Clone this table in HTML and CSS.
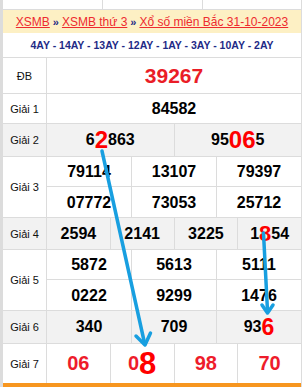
FILE: index.html
```html
<!DOCTYPE html>
<html lang="vi">
<head>
<meta charset="utf-8">
<title>XSMB 31-10-2023</title>
<link rel="stylesheet" href="styles.css">
</head>
<body>
<div class="wrap">
  <div class="prev"><div></div><div></div><div></div></div>
  <div class="title"><a>XSMB</a> <b>»</b> <a>XSMB thứ 3</a> <b>»</b> <a>Xổ số miền Bắc 31-10-2023</a></div>
  <div class="codes">4AY - 14AY - 13AY - 12AY - 1AY - 3AY - 10AY - 2AY</div>

  <div class="row h36">
    <div class="lbl">ĐB</div>
    <div class="cells c1"><div class="c db">39267</div></div>
  </div>
  <div class="row h30">
    <div class="lbl">Giải 1</div>
    <div class="cells c1"><div class="c">84582</div></div>
  </div>
  <div class="row h33 gray">
    <div class="lbl">Giải 2</div>
    <div class="cells c2">
      <div class="c">6<span class="hl s24">2</span>863</div>
      <div class="c">95<span class="hl s24">06</span>5</div>
    </div>
  </div>
  <div class="row h61">
    <div class="lbl">Giải 3</div>
    <div class="cells c3 two">
      <div class="c">79114</div><div class="c">13107</div><div class="c">79397</div>
      <div class="c">07772</div><div class="c">73053</div><div class="c">25712</div>
    </div>
  </div>
  <div class="row h32 gray">
    <div class="lbl">Giải 4</div>
    <div class="cells c4">
      <div class="c">2594</div><div class="c">2141</div><div class="c">3225</div>
      <div class="c">1<span class="hl s22">8</span>54</div>
    </div>
  </div>
  <div class="row h61">
    <div class="lbl">Giải 5</div>
    <div class="cells c3 two">
      <div class="c">5872</div><div class="c">5613</div><div class="c">5111</div>
      <div class="c">0222</div><div class="c">9299</div><div class="c">1476</div>
    </div>
  </div>
  <div class="row h33 gray">
    <div class="lbl">Giải 6</div>
    <div class="cells c3">
      <div class="c">340</div><div class="c">709</div>
      <div class="c">93<span class="hl s23">6</span></div>
    </div>
  </div>
  <div class="row h39 last">
    <div class="lbl">Giải 7</div>
    <div class="cells c4 g7">
      <div class="c">06</div>
      <div class="c">0<span class="hl s30">8</span></div>
      <div class="c">98</div>
      <div class="c">70</div>
    </div>
  </div>
  <div class="foot"></div>

  <svg class="arrows" width="303" height="387" viewBox="0 0 303 387">
    <g fill="none" stroke="#189fe0" stroke-width="3.5" stroke-linecap="round" stroke-linejoin="round">
      <line x1="102" y1="151" x2="144.5" y2="343"/>
      <polyline points="136,336 145,345 150.5,333"/>
      <line x1="263.5" y1="233" x2="267.5" y2="311"/>
      <polyline points="262,305 267.5,313 273,305"/>
    </g>
  </svg>
</div>
</body>
</html>
```

FILE: styles.css
```css
html, body {
  margin: 0;
  padding: 0;
  background: #fff;
}
body {
  font-family: "Liberation Sans", Arial, sans-serif;
  color: #000;
}
.wrap {
  position: relative;
  width: 298px;
  border-left: 3px solid #dcdcdc;
  border-right: 1px solid #dcdcdc;
  height: 387px;
  overflow: hidden;
}
.prev {
  display: grid;
  grid-template-columns: repeat(3, 1fr);
  height: 10px;
  box-sizing: border-box;
  border-bottom: 1px solid #dcdcdc;
}
.prev div + div {
  border-left: 1px solid #dcdcdc;
}
.title {
  height: 23px;
  background: #fdf0c4;
  display: flex;
  align-items: center;
  justify-content: center;
  gap: 3px;
  font-size: 12px;
  white-space: nowrap;
}
.title a {
  color: #ee2a2f;
  text-decoration: underline;
}
.title b {
  color: #1e2a86;
  font-size: 11px;
}
.codes {
  height: 25px;
  box-sizing: border-box;
  border-bottom: 1px solid #dcdcdc;
  display: flex;
  align-items: center;
  justify-content: center;
  font-size: 10.5px;
  font-weight: bold;
  color: #1e2a86;
  white-space: nowrap;
}
.row {
  display: flex;
  box-sizing: border-box;
  border-bottom: 1px solid #dcdcdc;
}
.row.last {
  border-bottom: none;
}
.h30 { height: 30px; }
.h32 { height: 32px; }
.h33 { height: 33px; }
.h36 { height: 36px; }
.h39 { height: 39px; }
.h61 { height: 61px; }
.gray {
  background: #f2f2f2;
}
.lbl {
  width: 43px;
  flex: none;
  display: flex;
  align-items: center;
  justify-content: center;
  font-size: 11px;
  color: #111;
}
.cells {
  flex: 1;
  display: grid;
}
.c1 { grid-template-columns: 1fr; }
.c2 { grid-template-columns: repeat(2, 1fr); }
.c3 { grid-template-columns: repeat(3, 1fr); }
.c4 { grid-template-columns: repeat(4, 1fr); }
.two {
  grid-template-rows: 30px 31px;
}
.two .c:nth-child(-n+3) {
  border-bottom: 1px solid #dcdcdc;
}
.c {
  box-sizing: border-box;
  border-left: 1px solid #dcdcdc;
  display: flex;
  align-items: center;
  justify-content: center;
  font-size: 16px;
  font-weight: bold;
  white-space: nowrap;
}
.c.db {
  font-size: 21px;
  color: #ea1d27;
}
.g7 .c {
  font-size: 20px;
  color: #ee1c2b;
}
.hl {
  color: #ff0000;
  line-height: 1;
}
.s22 { font-size: 22px; }
.s23 { font-size: 23px; }
.s24 { font-size: 24px; }
.s30 { font-size: 31px; }
.foot {
  height: 10px;
  background: #f7961f;
}
.arrows {
  position: absolute;
  left: -3px;
  top: 0;
  pointer-events: none;
}
```
